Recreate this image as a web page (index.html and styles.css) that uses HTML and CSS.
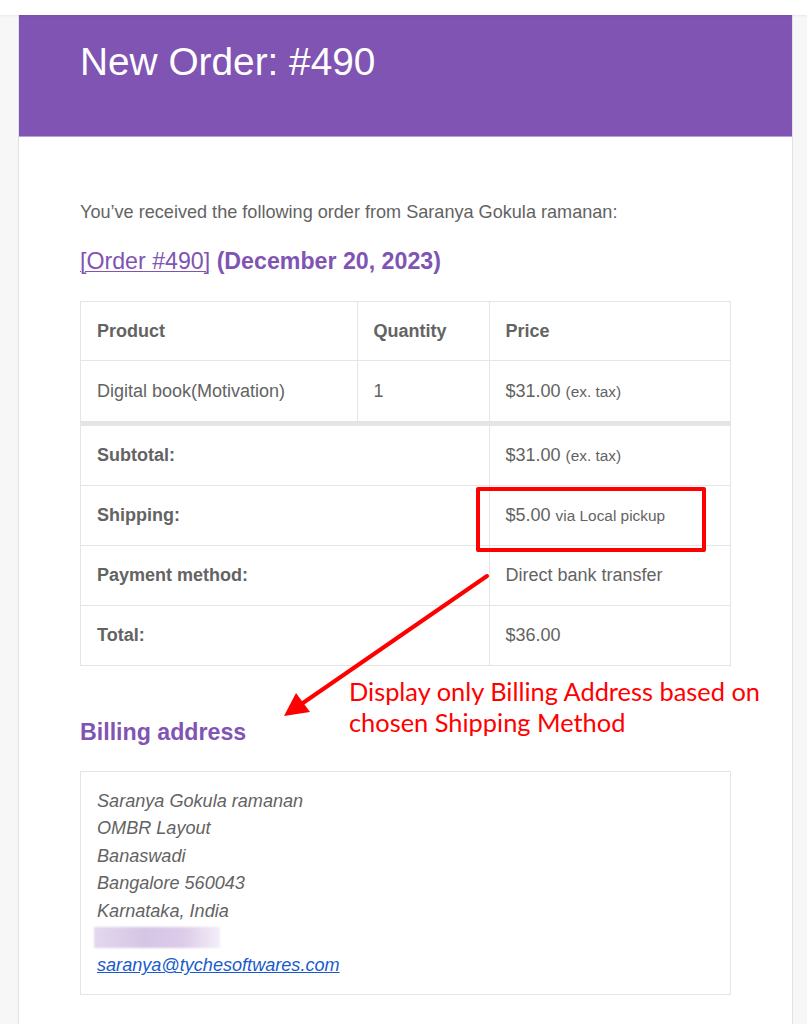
FILE: index.html
```html
<!DOCTYPE html>
<html>
<head>
<meta charset="utf-8">
<link rel="stylesheet" href="styles.css">
</head>
<body>
<div class="topbar"></div>
<div class="page">
  <div class="container">
    <div class="header"><h1>New Order: #490</h1></div>
    <div class="content">
      <p class="intro">You’ve received the following order from Saranya Gokula ramanan:</p>
      <h2 class="order-title"><a href="#" class="order-link">[Order #490]</a> (December 20, 2023)</h2>
      <table class="order-table">
        <colgroup><col class="c1"><col class="c2"><col class="c3"></colgroup>
        <thead>
          <tr><th>Product</th><th>Quantity</th><th>Price</th></tr>
        </thead>
        <tbody>
          <tr><td>Digital book(Motivation)</td><td>1</td><td>$31.00 <small>(ex. tax)</small></td></tr>
        </tbody>
        <tfoot>
          <tr class="first"><th colspan="2">Subtotal:</th><td>$31.00 <small>(ex. tax)</small></td></tr>
          <tr><th colspan="2">Shipping:</th><td>$5.00 <small>via Local pickup</small></td></tr>
          <tr><th colspan="2">Payment method:</th><td>Direct bank transfer</td></tr>
          <tr><th colspan="2">Total:</th><td>$36.00</td></tr>
        </tfoot>
      </table>
      <h2 class="section-title">Billing address</h2>
      <address class="address">
        Saranya Gokula ramanan<br>
        OMBR Layout<br>
        Banaswadi<br>
        Bangalore 560043<br>
        Karnataka, India<br>
        <span class="blur"></span><br>
        <a href="#" class="email">saranya@tychesoftwares.com</a>
      </address>
    </div>
  </div>
  <div class="highlight"></div>
  <svg class="arrow" width="807" height="1024" viewBox="0 0 807 1024">
    <line x1="487" y1="576" x2="300" y2="705" stroke="#ff0000" stroke-width="4" stroke-linecap="round"/>
    <polygon points="284,716 296,693 310,712" fill="#ff0000"/>
  </svg>
  <div class="note">Display only Billing Address based on<br>chosen Shipping Method</div>
</div>
</body>
</html>
```
FILE: styles.css
```css
html, body {
  margin: 0;
  padding: 0;
}
body {
  background: #f7f7f7;
  font-family: "Liberation Sans", Arial, sans-serif;
  color: #636363;
}
.topbar {
  height: 15px;
  background: #ffffff;
  box-shadow: 0 1px 2px rgba(0,0,0,0.06);
  position: relative;
  z-index: 1;
}
.page {
  position: relative;
  height: 1009px;
  overflow: hidden;
}
.container {
  margin-left: 18px;
  width: 773px;
  background: #ffffff;
  border-left: 1px solid #e2e2e2;
  border-right: 1px solid #e2e2e2;
  min-height: 1009px;
}
.header {
  background: #7f54b3;
  height: 122px;
  padding: 0 61px;
  box-sizing: border-box;
  border-bottom: 1px solid #b99fd9;
}
.header h1 {
  margin: 0;
  padding-top: 18px;
  font-size: 38.8px;
  font-weight: 400;
  line-height: 57px;
  color: #ffffff;
}
.content {
  padding: 62px 61px 0;
  font-size: 18.1px;
  line-height: 27px;
}
.intro {
  margin: 0 0 20px;
}
.order-title {
  margin: 0 0 25px;
  font-size: 23.2px;
  line-height: 30px;
  font-weight: 700;
  color: #7f54b3;
}
.order-link {
  color: #7f54b3;
  font-weight: 400;
  text-decoration: underline;
  text-underline-offset: 2px;
  text-decoration-thickness: 1px;
}
.order-table {
  width: 651px;
  border-collapse: collapse;
  border: 1px solid #e5e5e5;
  font-size: 18px;
  color: #636363;
}
.c1 { width: 277px; }
.c2 { width: 132px; }
.c3 { width: 242px; }
.order-table th, .order-table td {
  border: 1px solid #e5e5e5;
  padding: 0 16px;
  text-align: left;
  vertical-align: middle;
  line-height: 27px;
}
.order-table thead th { height: 58px; }
.order-table tbody td { height: 60px; }
.order-table tfoot th, .order-table tfoot td { height: 59px; }
.order-table tfoot tr.first th, .order-table tfoot tr.first td {
  border-top: 5px solid #e5e5e5;
}
.order-table th { font-weight: 700; }
.order-table small {
  font-size: 15.4px;
}
.section-title {
  margin: 51px 0 24px;
  font-size: 23.2px;
  line-height: 30px;
  font-weight: 700;
  color: #7f54b3;
}
.address {
  border: 1px solid #e5e5e5;
  padding: 16px 16px 14px;
  font-style: italic;
  font-size: 18.1px;
  line-height: 27.4px;
  color: #636363;
}
.blur {
  display: inline-block;
  width: 126px;
  height: 21px;
  vertical-align: -4px;
  margin-left: -3px;
  background: linear-gradient(90deg, #e3d7ee 0%, #d6c6e6 40%, #dccbe9 70%, #f3eef8 100%);
  filter: blur(1px);
}
.email {
  color: #1a5bc9;
  text-decoration: underline;
}
.highlight {
  position: absolute;
  left: 476px;
  top: 472px;
  width: 222px;
  height: 57px;
  border: 4px solid #ff0000;
  border-radius: 2px;
}
.arrow {
  position: absolute;
  left: 0;
  top: -15px;
}
.note {
  position: absolute;
  left: 349px;
  top: 661px;
  font-family: Lato, "Open Sans", sans-serif;
  font-size: 25.4px;
  line-height: 31px;
  color: #ff0000;
}
```
